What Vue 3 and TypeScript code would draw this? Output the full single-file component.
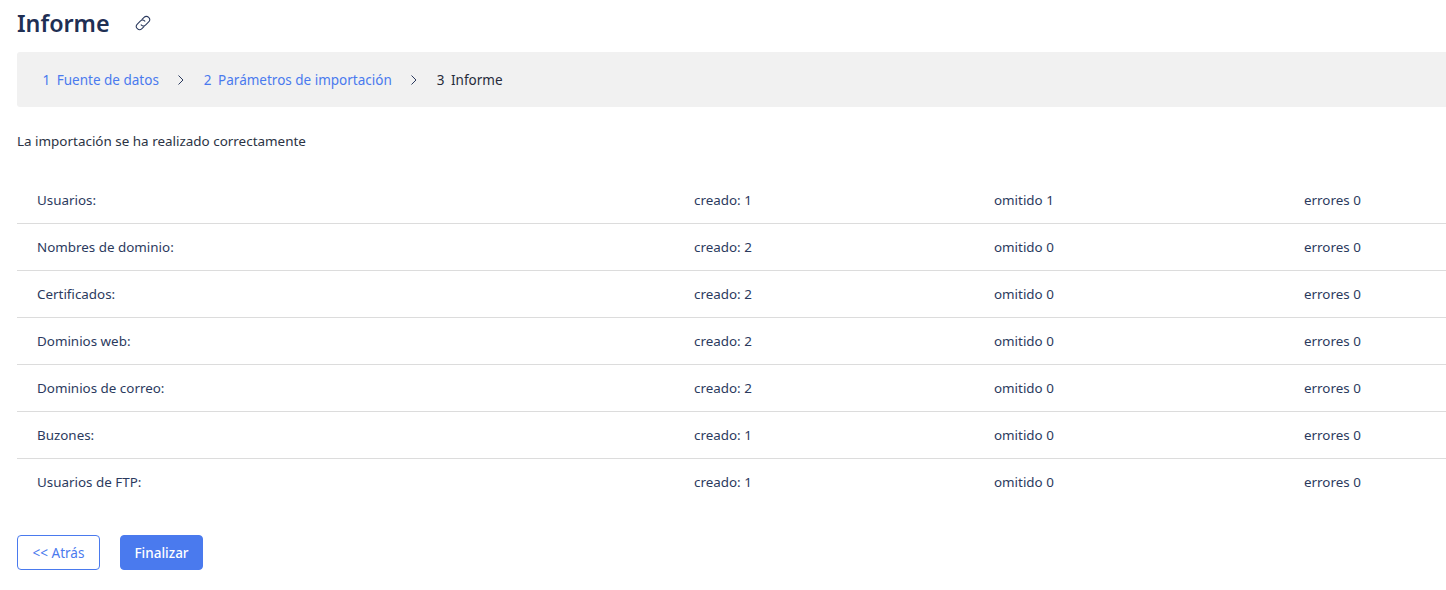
<script setup lang="ts">
const rows = [
  { name: 'Usuarios:', created: 1, skipped: 1, errors: 0 },
  { name: 'Nombres de dominio:', created: 2, skipped: 0, errors: 0 },
  { name: 'Certificados:', created: 2, skipped: 0, errors: 0 },
  { name: 'Dominios web:', created: 2, skipped: 0, errors: 0 },
  { name: 'Dominios de correo:', created: 2, skipped: 0, errors: 0 },
  { name: 'Buzones:', created: 1, skipped: 0, errors: 0 },
  { name: 'Usuarios de FTP:', created: 1, skipped: 0, errors: 0 },
]
</script>

<template>
  <div class="page">
    <header class="head">
      <h1 class="title">Informe</h1>
      <svg class="link" width="20" height="20" viewBox="0 0 16 16" fill="none" stroke="#2b3a5e" stroke-width="0.85" stroke-linecap="round" stroke-linejoin="round">
        <g transform="rotate(-45 8 8)">
          <path d="M6.500 10.600H4.200a2.600 2.600 0 0 1 0-5.200H7.500a2.600 2.600 0 0 1 2.600 2.600" />
          <path d="M9.500 5.400H11.800a2.600 2.600 0 0 1 0 5.200H8.500a2.600 2.600 0 0 1-2.600-2.600" />
        </g>
      </svg>
    </header>
    <nav class="steps">
      <a class="step done"><span class="num">1</span>Fuente de datos</a>
      <svg class="chev" width="8" height="12" viewBox="0 0 8 12" fill="none" stroke="#2b3a5e" stroke-width="1"><path d="M1.500 1.500 6 6l-4.500 4.500" /></svg>
      <a class="step done"><span class="num">2</span>Parámetros de importación</a>
      <svg class="chev" width="8" height="12" viewBox="0 0 8 12" fill="none" stroke="#2b3a5e" stroke-width="1"><path d="M1.500 1.500 6 6l-4.500 4.500" /></svg>
      <span class="step current"><span class="num">3</span>Informe</span>
    </nav>
    <p class="msg">La importación se ha realizado correctamente</p>
    <div class="table">
      <div v-for="r in rows" :key="r.name" class="row">
        <span>{{ r.name }}</span>
        <span>creado: {{ r.created }}</span>
        <span>omitido {{ r.skipped }}</span>
        <span>errores {{ r.errors }}</span>
      </div>
    </div>
    <div class="actions">
      <button class="btn ghost">&lt;&lt; Atrás</button>
      <button class="btn primary">Finalizar</button>
    </div>
  </div>
</template>

<style scoped>
.page {
  box-sizing: border-box;
  width: 1446px;
  height: 590px;
  overflow: hidden;
  padding: 0 0 0 17px;
  background: #fff;
  color: #2b3a5e;
  font-family: "Noto Sans", "Open Sans", sans-serif;
  font-size: 13.4px;
}
.head {
  display: flex;
  align-items: center;
  height: 46px;
  gap: 23px;
}
.title {
  margin: 0;
  font-size: 23.300px;
  font-weight: 600;
  line-height: 46px;
  color: #1f2f54;
}
.steps {
  display: flex;
  align-items: center;
  height: 55px;
  margin-top: 6px;
  padding-left: 25.500px;
  background: #f1f1f1;
  border-radius: 3px 0 0 3px;
  font-size: 13.500px;
}
.step {
  display: flex;
  white-space: nowrap;
}
.num {
  margin-right: 6.500px;
}
.done {
  color: #4a7aee;
}
.current {
  color: #262b3a;
}
.chev {
  margin: 0 18.500px;
}
.msg {
  margin: 0;
  padding-top: 25px;
  line-height: 19px;
  height: 45px;
  color: #2b3344;
  font-size: 13.450px;
}
.row {
  display: grid;
  grid-template-columns: 657px 300px 310px 1fr;
  align-items: center;
  height: 46px;
  padding-left: 20px;
  border-bottom: 1px solid #dcdcdc;
}
.row:last-child {
  border-bottom: none;
}
.actions {
  display: flex;
  gap: 20px;
  margin-top: 30px;
}
.btn {
  box-sizing: border-box;
  height: 35px;
  width: 83px;
  padding: 0;
  border-radius: 4px;
  font-family: inherit;
  font-size: 13.500px;
}
.ghost {
  background: #fff;
  border: 1px solid #4a7aee;
  color: #4a7aee;
}
.primary {
  background: #4a7aee;
  border: 1px solid #4a7aee;
  color: #fff;
  font-weight: 500;
}
</style>
